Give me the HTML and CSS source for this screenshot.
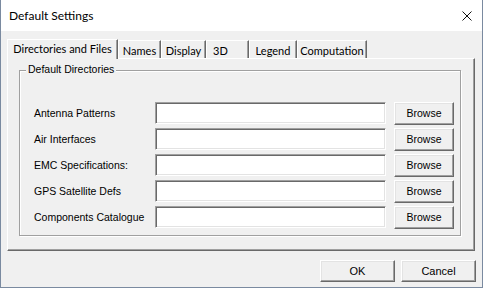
FILE: index.html
```html
<!DOCTYPE html>
<html lang="en">
<head>
    <meta charset="UTF-8">
    <title>Default Settings</title>
    <link rel="stylesheet" href="styles.css">
</head>
<body>
    <div class="window">
        <div class="titlebar">
            <span class="title">Default Settings</span>
            <svg class="close" width="10" height="10" viewBox="0 0 10 10">
                <path d="M0.5 0.5 L9.5 9.5 M9.5 0.5 L0.5 9.5" stroke="#111" stroke-width="1" fill="none"/>
            </svg>
        </div>

        <div class="content">
            <div class="tabs">
                <div class="tab active tab-dirs">Directories and Files</div>
                <div class="tab tab-names">Names</div>
                <div class="tab tab-display">Display</div>
                <div class="tab tab-3d">3D</div>
                <div class="tab tab-legend">Legend</div>
                <div class="tab tab-comp">Computation</div>
            </div>

            <div class="panel">
                <div class="group">
                    <div class="group-title">Default Directories</div>
                    <div class="rows">
                        <div class="row">
                            <label>Antenna Patterns</label>
                            <input class="path" type="text">
                            <button class="btn browse">Browse</button>
                        </div>
                        <div class="row">
                            <label>Air Interfaces</label>
                            <input class="path" type="text">
                            <button class="btn browse">Browse</button>
                        </div>
                        <div class="row">
                            <label>EMC Specifications:</label>
                            <input class="path" type="text">
                            <button class="btn browse">Browse</button>
                        </div>
                        <div class="row">
                            <label>GPS Satellite Defs</label>
                            <input class="path" type="text">
                            <button class="btn browse">Browse</button>
                        </div>
                        <div class="row">
                            <label>Components Catalogue</label>
                            <input class="path" type="text">
                            <button class="btn browse">Browse</button>
                        </div>
                    </div>
                </div>
            </div>

            <div class="footer">
                <button class="btn dialog-btn">OK</button>
                <button class="btn dialog-btn">Cancel</button>
            </div>
        </div>
    </div>
</body>
</html>
```

FILE: styles.css
```css
body {
    margin: 0;
    font-family: "Liberation Sans", Arial, sans-serif;
    font-size: 10.5px;
    color: #000;
    background: #f0f0f0;
}
.window {
    width: 483px;
    height: 288px;
    box-sizing: border-box;
    border: 1px solid #7a8aa0;
    border-top: none;
    background: #f0f0f0;
    display: flex;
    flex-direction: column;
}
.titlebar {
    height: 31px;
    background: #fff;
    display: flex;
    align-items: center;
    justify-content: space-between;
    padding: 0 10px 0 8px;
    font-family: Lato, "Noto Sans", sans-serif;
    font-size: 12px;
    flex-shrink: 0;
}
.title {
    margin-top: -1px;
}
.close {
    display: block;
}
.content {
    flex: 1;
    padding: 8px 7px 0 6px;
    display: flex;
    flex-direction: column;
}
.tabs {
    display: flex;
    align-items: flex-end;
    height: 19px;
    font-family: Lato, "Noto Sans", sans-serif;
    font-size: 11px;
    position: relative;
    z-index: 1;
}
.tab {
    box-sizing: border-box;
    height: 18px;
    border: 1px solid;
    border-color: #fff #696969 transparent #fff;
    border-bottom: none;
    box-shadow: inset -1px 0 0 #a0a0a0;
    background: #f0f0f0;
    display: flex;
    align-items: center;
    justify-content: center;
    padding-top: 2px;
}
.tab.active {
    height: 20px;
    margin-bottom: -1px;
    padding-top: 0;
    padding-bottom: 2px;
}
.tab-dirs { width: 111px; }
.tab-names { width: 43px; }
.tab-display { width: 45px; }
.tab-3d {
    width: 43px;
    justify-content: flex-start;
    padding-left: 6px;
}
.tab-legend { width: 48px; }
.tab-comp { width: 70px; }

.panel {
    box-sizing: border-box;
    height: 193px;
    border: 1px solid;
    border-color: #fff #696969 #696969 #fff;
    box-shadow: inset -1px -1px 0 #a0a0a0;
    padding: 11px 13px 14px 11px;
}
.group {
    box-sizing: border-box;
    height: 166px;
    border: 1px solid #a0a0a0;
    box-shadow: 1px 1px 0 #fff, inset 1px 1px 0 #fff;
    padding: 0 6px 0 14px;
}
.group-title {
    width: fit-content;
    line-height: 13px;
    margin: -8px 0 0 -8px;
    padding: 0 2px;
    background: #f0f0f0;
}
.rows {
    margin-top: 26px;
    display: flex;
    flex-direction: column;
    gap: 4px;
}
.row {
    display: flex;
    align-items: center;
    height: 22px;
}
.row label {
    width: 121px;
    flex-shrink: 0;
}
.path {
    box-sizing: border-box;
    flex: 1;
    height: 22px;
    margin: 0 8px 0 0;
    border: 1px solid;
    border-color: #a0a0a0 #fff #fff #a0a0a0;
    box-shadow: inset 1px 1px 0 #696969, inset -1px -1px 0 #e3e3e3;
    background: #fff;
    outline: none;
}
.btn {
    box-sizing: border-box;
    font-family: "Liberation Sans", Arial, sans-serif;
    font-size: 10.5px;
    color: #000;
    background: #f0f0f0;
    border: 1px solid;
    border-color: #fff #696969 #696969 #fff;
    box-shadow: inset -1px -1px 0 #a0a0a0, inset 1px 1px 0 #e3e3e3;
    padding: 0;
}
.browse {
    width: 60px;
    height: 23px;
    flex-shrink: 0;
}
.footer {
    display: flex;
    justify-content: flex-end;
    gap: 6px;
    margin-top: 9px;
    margin-right: -1px;
}
.dialog-btn {
    width: 75px;
    height: 22px;
    font-size: 11px;
}
```
